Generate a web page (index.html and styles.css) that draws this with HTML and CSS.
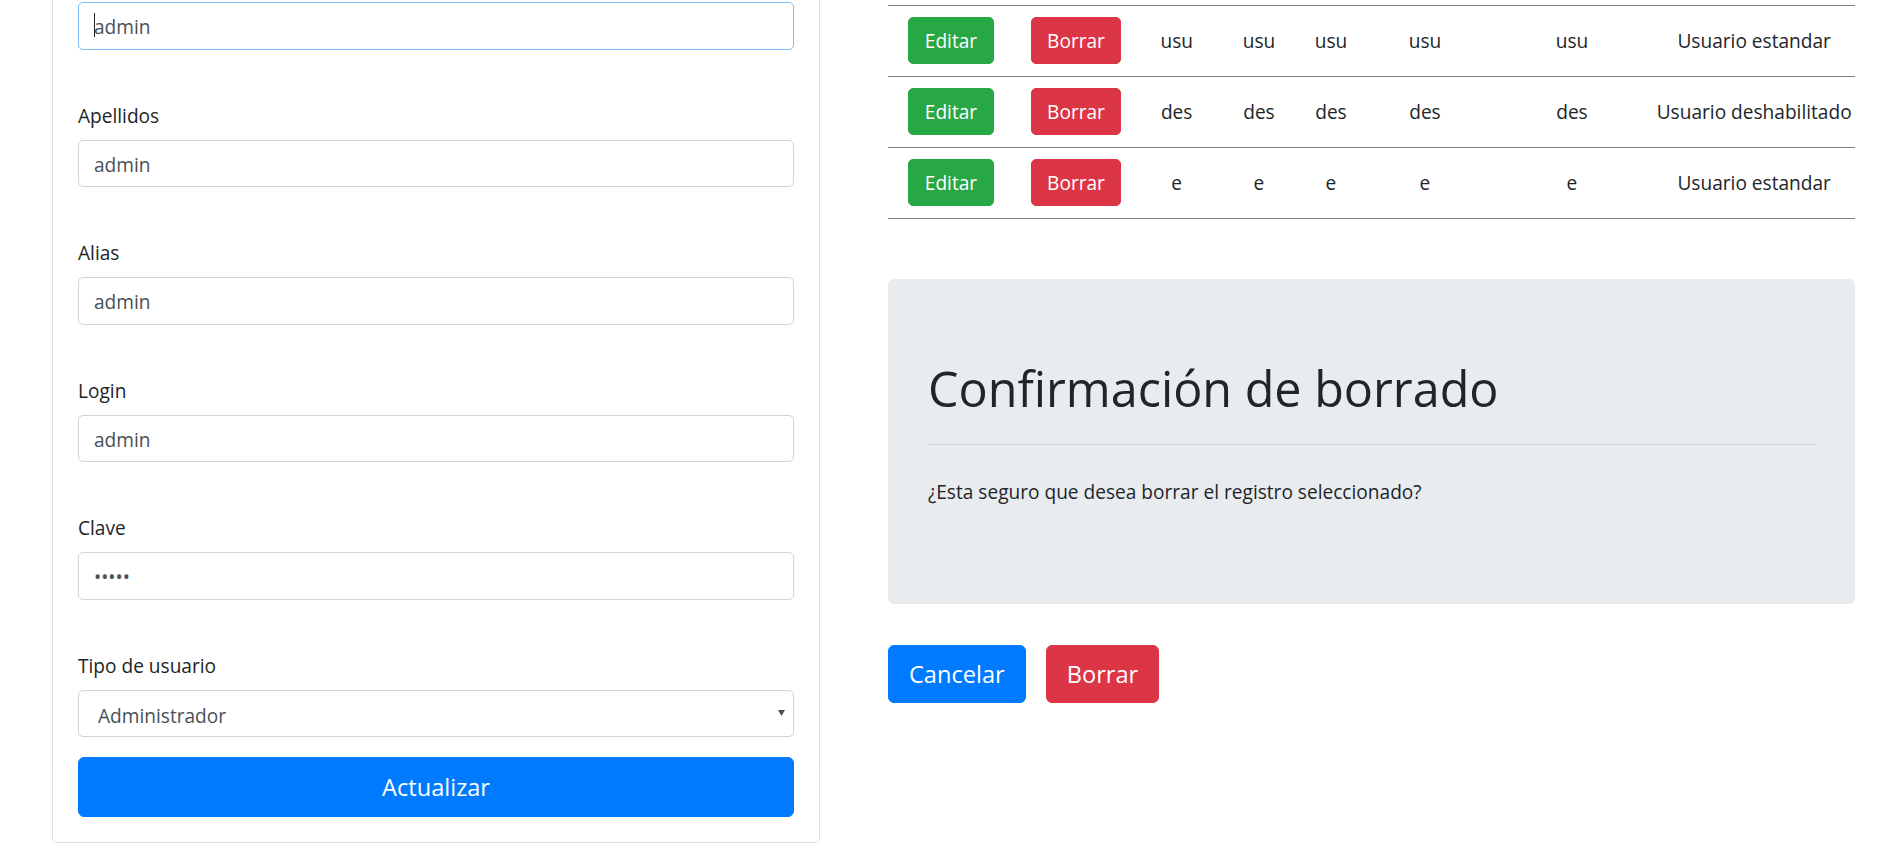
FILE: index.html
```html
<!DOCTYPE html>
<html lang="es">
<head>
<meta charset="utf-8">
<title>Usuarios</title>
<link rel="stylesheet" href="styles.css">
</head>
<body>
<div class="page">
  <div class="left">
    <div class="card">
      <form class="card-body">
        <div class="group">
          <div class="caret-wrap">
            <input class="form-control is-focused" type="text" value="admin">
          </div>
        </div>
        <div class="group">
          <label>Apellidos</label>
          <input class="form-control" type="text" value="admin">
        </div>
        <div class="group">
          <label>Alias</label>
          <input class="form-control" type="text" value="admin">
        </div>
        <div class="group">
          <label>Login</label>
          <input class="form-control" type="text" value="admin">
        </div>
        <div class="group">
          <label>Clave</label>
          <input class="form-control" type="password" value="admin">
        </div>
        <div class="group group-last">
          <label>Tipo de usuario</label>
          <div class="select-wrap">
            <select class="form-control form-select">
              <option>Administrador</option>
            </select>
            <svg class="select-arrow" width="7" height="6" viewBox="0 0 7 6"><polygon points="0,0 7,0 3.5,6" fill="#4a4d52"/></svg>
          </div>
        </div>
        <button type="button" class="btn btn-primary btn-lg btn-block">Actualizar</button>
      </form>
    </div>
  </div>

  <div class="right">
    <table class="users">
      <colgroup>
        <col class="c1"><col class="c2"><col class="c3"><col class="c4"><col class="c5"><col class="c6"><col class="c7"><col class="c8">
      </colgroup>
      <tbody>
        <tr>
          <td><button type="button" class="btn btn-success">Editar</button></td>
          <td><button type="button" class="btn btn-danger">Borrar</button></td>
          <td>usu</td><td>usu</td><td>usu</td><td>usu</td><td>usu</td>
          <td>Usuario estandar</td>
        </tr>
        <tr>
          <td><button type="button" class="btn btn-success">Editar</button></td>
          <td><button type="button" class="btn btn-danger">Borrar</button></td>
          <td>des</td><td>des</td><td>des</td><td>des</td><td>des</td>
          <td>Usuario deshabilitado</td>
        </tr>
        <tr>
          <td><button type="button" class="btn btn-success">Editar</button></td>
          <td><button type="button" class="btn btn-danger">Borrar</button></td>
          <td>e</td><td>e</td><td>e</td><td>e</td><td>e</td>
          <td>Usuario estandar</td>
        </tr>
      </tbody>
    </table>

    <div class="jumbotron">
      <h1 class="jumbo-title">Confirmación de borrado</h1>
      <hr class="jumbo-rule">
      <p class="jumbo-text">¿Esta seguro que desea borrar el registro seleccionado?</p>
    </div>

    <div class="actions">
      <button type="button" class="btn btn-primary btn-lg">Cancelar</button>
      <button type="button" class="btn btn-danger btn-lg">Borrar</button>
    </div>
  </div>
</div>
</body>
</html>
```

FILE: styles.css
```css
* {
  box-sizing: border-box;
}

html, body {
  margin: 0;
  padding: 0;
  background: #fff;
}

body {
  font-family: "Open Sans", "Noto Sans", sans-serif;
  font-size: 19.1px;
  line-height: 30px;
  color: #212529;
}

.page {
  display: flex;
  align-items: flex-start;
  gap: 68px;
  padding-left: 52px;
}

.left {
  flex: none;
  width: 768px;
}

.right {
  flex: none;
  width: 967px;
  padding-top: 4.5px;
}

/* ---------- card / form ---------- */
.card {
  border: 1px solid rgba(0, 0, 0, 0.125);
  border-top: 0;
  border-radius: 0 0 5px 5px;
  background: #fff;
}

.card-body {
  display: block;
  margin: 0;
  padding: 2.3px 25px 24.5px;
}

.group {
  margin-bottom: 50px;
}

.group-last {
  margin-bottom: 20px;
}

label {
  display: block;
  margin-bottom: 10px;
  padding-top: 1px;
  height: 30px;
  line-height: 30px;
  color: #212529;
}

.form-control {
  display: block;
  width: 100%;
  height: 47.5px;
  margin: 0;
  padding: 8.5px 15px 6.5px;
  font-family: inherit;
  font-size: 19.1px;
  line-height: 30px;
  color: #495057;
  background: #fff;
  border: 1px solid #ced4da;
  border-radius: 5px;
  outline: none;
}

.form-control.is-focused {
  border-color: #80bdff;
}

.caret-wrap {
  position: relative;
}

.caret-wrap::after {
  content: "";
  position: absolute;
  left: 16px;
  top: 11px;
  width: 1px;
  height: 24px;
  background: #222;
}

.select-wrap {
  position: relative;
}

.form-select {
  -webkit-appearance: none;
  appearance: none;
  padding: 10px 30px 5px 19px;
  color: #495057;
}

.select-arrow {
  position: absolute;
  right: 9px;
  top: 20px;
  pointer-events: none;
}

/* ---------- buttons ---------- */
.btn {
  display: inline-block;
  margin: 0;
  padding: 7.5px 15px;
  font-family: inherit;
  font-size: 19.1px;
  line-height: 30px;
  font-weight: 400;
  color: #fff;
  text-align: center;
  border: 1px solid transparent;
  border-radius: 5px;
  cursor: pointer;
}

.btn-primary {
  background: #007bff;
  border-color: #007bff;
}

.btn-success {
  background: #28a745;
  border-color: #28a745;
}

.btn-danger {
  background: #dc3545;
  border-color: #dc3545;
}

.btn-lg {
  padding: 10px 20px;
  font-size: 23.6px;
  line-height: 37.5px;
  border-radius: 6px;
}

.btn-block {
  display: block;
  width: 100%;
  height: 60px;
}

/* ---------- table ---------- */
.users {
  width: 967px;
  table-layout: fixed;
  border-collapse: collapse;
  margin-bottom: 60.5px;
}

.users .c1 { width: 126px; }
.users .c2 { width: 124px; }
.users .c3 { width: 77.4px; }
.users .c4 { width: 87.2px; }
.users .c5 { width: 56.8px; }
.users .c6 { width: 131.2px; }
.users .c7 { width: 162.8px; }
.users .c8 { width: 201.6px; }

.users td {
  padding: 11.5px 0;
  border-top: 1px solid #808080;
  text-align: center;
  vertical-align: middle;
  white-space: nowrap;
  line-height: 30px;
}

.users tr:last-child td {
  border-bottom: 1px solid #808080;
}

.users .btn {
  height: 47px;
  padding-left: 15.5px;
  padding-right: 15.5px;
}

/* ---------- jumbotron ---------- */
.jumbotron {
  background: #e9ecef;
  border-radius: 6px;
  padding: 79px 40px 77px;
  margin-bottom: 41px;
}

.jumbo-title {
  margin: 0 0 26px;
  font-size: 48.5px;
  line-height: 60px;
  font-weight: 400;
  color: #212529;
}

.jumbo-rule {
  margin: 0 0 31.7px;
  border: 0;
  border-top: 1px solid rgba(0, 0, 0, 0.1);
  height: 0;
}

.jumbo-text {
  margin: 0 0 20px;
  line-height: 30px;
}

.actions {
  display: flex;
  gap: 20px;
}

.actions .btn {
  height: 58.5px;
}
```
